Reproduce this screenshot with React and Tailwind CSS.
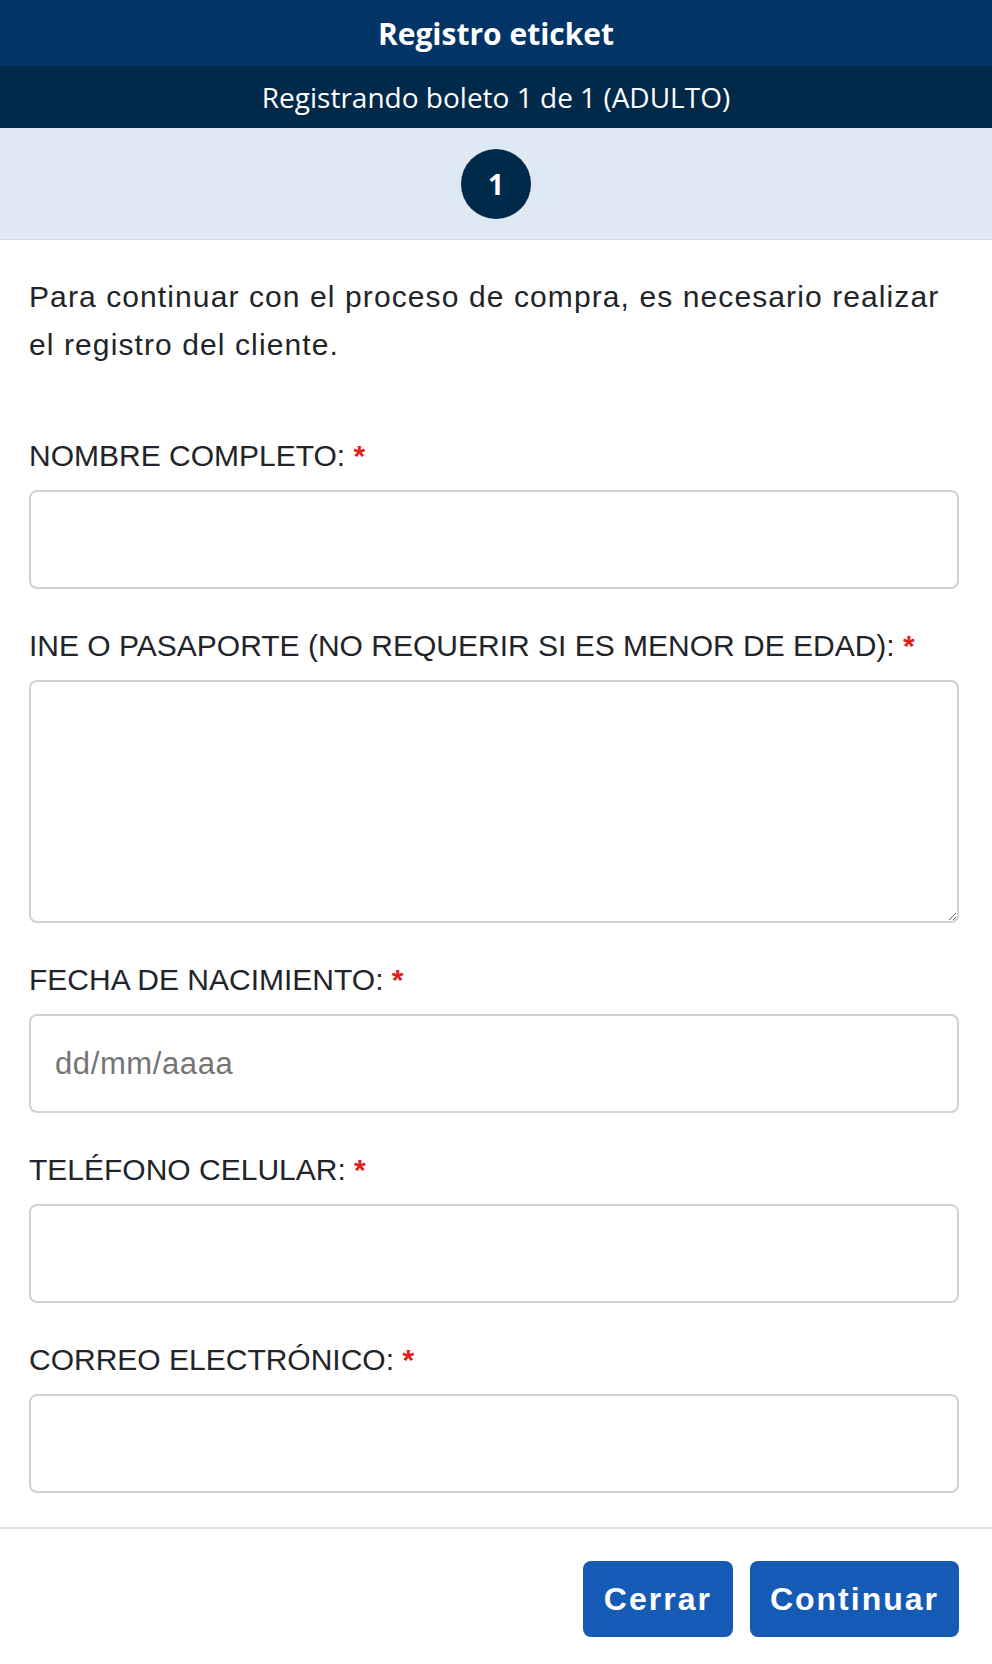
import React from "react";

const FIELDS = [
  { label: "NOMBRE COMPLETO:", kind: "input" },
  { label: "INE O PASAPORTE (NO REQUERIR SI ES MENOR DE EDAD):", kind: "textarea" },
  { label: "FECHA DE NACIMIENTO:", kind: "input", placeholder: "dd/mm/aaaa" },
  { label: "TELÉFONO CELULAR:", kind: "input" },
  { label: "CORREO ELECTRÓNICO:", kind: "input" },
];

const body = { fontFamily: '"Liberation Sans", Arial, sans-serif' };
const head = { fontFamily: '"Open Sans", "Noto Sans", sans-serif' };

function Field({ label, kind, placeholder, first }) {
  return (
    <div className={first ? "mt-[69px]" : "mt-[39px]"}>
      <label className="block text-[30px] leading-[36px] text-[#212529] mb-4">
        {label} <span className="text-[#e0201b] font-bold">*</span>
      </label>
      {kind === "textarea" ? (
        <textarea className="block w-full h-[243px] rounded-lg border-2 border-[#d2d2d2] bg-white px-6 py-4 text-[30px] outline-none" />
      ) : (
        <input
          placeholder={placeholder}
          className="block w-full h-[99px] rounded-lg border-2 border-[#d2d2d2] bg-white px-6 text-[31px] tracking-[0.6px] text-[#212529] placeholder:text-[#757575] outline-none"
        />
      )}
    </div>
  );
}

export default function App() {
  return (
    <div className="w-full min-h-[1664px] bg-white" style={body}>
      <div className="h-[66px] bg-[#023466] flex items-center justify-center text-white text-[30px] font-bold" style={head}>
        Registro eticket
      </div>
      <div className="h-[62px] bg-[#012949] flex items-center justify-center text-white text-[28px]" style={head}>
        Registrando boleto 1 de 1 (ADULTO)
      </div>
      <div className="h-[112px] bg-[#dfe9f4] border-b border-[#d3dae2] flex items-center justify-center">
        <div className="w-[70px] h-[70px] rounded-full bg-[#012949] flex items-center justify-center text-white text-[28px] font-bold" style={head}>
          1
        </div>
      </div>

      <div className="pl-[29px] pr-[33px] pt-[33px] pb-[34px]">
        <p className="text-[30px] leading-[48px] tracking-[1.1px] text-[#212529]">
          Para continuar con el proceso de compra, es necesario realizar el registro del cliente.
        </p>
        {FIELDS.map((f, i) => (
          <Field key={f.label} {...f} first={i === 0} />
        ))}
      </div>

      <div className="border-t-2 border-[#e2e2e2] pl-[32px] pr-[33px] pt-[32px] flex justify-end gap-[17px]">
        <button className="h-[76px] px-[21px] rounded-lg bg-[#155bb5] text-white text-[32px] font-bold tracking-[2px]">
          Cerrar
        </button>
        <button className="h-[76px] px-[20px] rounded-lg bg-[#155bb5] text-white text-[32px] font-bold tracking-[2px]">
          Continuar
        </button>
      </div>
    </div>
  );
}
